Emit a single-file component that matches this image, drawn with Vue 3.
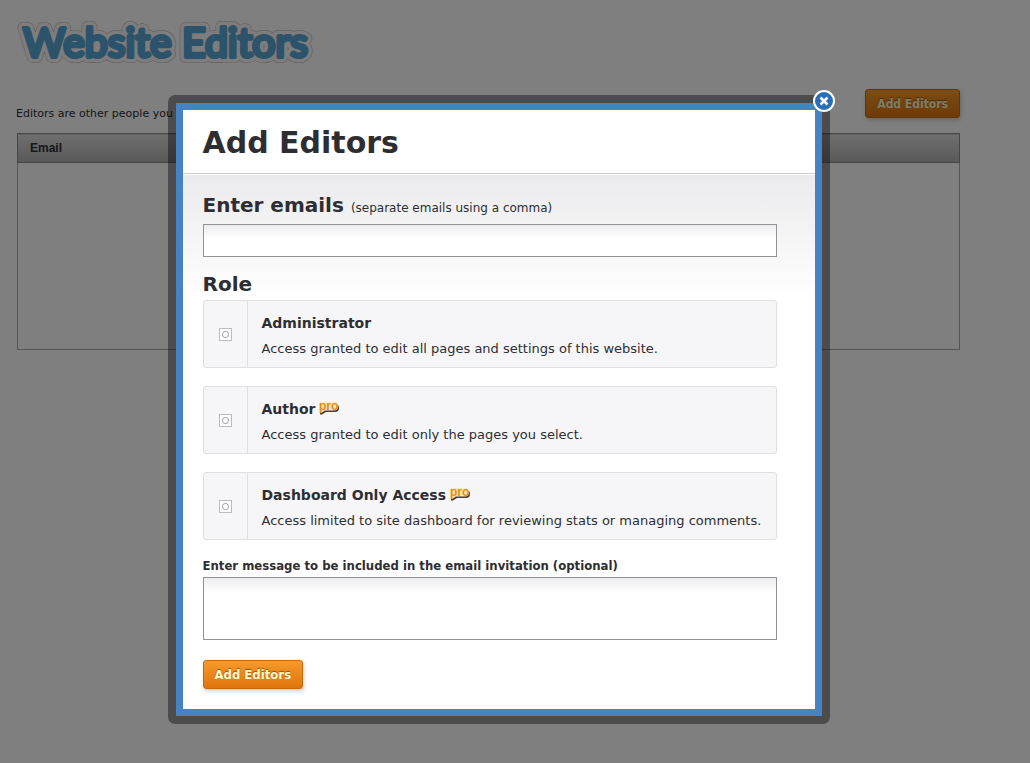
<script setup>
import { ref } from 'vue'

const role = ref('')
const emails = ref('')
const message = ref('')
const roles = [
  { id: 'admin', name: 'Administrator', pro: false, text: 'Access granted to edit all pages and settings of this website.' },
  { id: 'author', name: 'Author', pro: true, text: 'Access granted to edit only the pages you select.' },
  { id: 'dashboard', name: 'Dashboard Only Access', pro: true, text: 'Access limited to site dashboard for reviewing stats or managing comments.' },
]
</script>

<template>
  <div class="page">
    <h1 class="logo">
      <svg width="304" height="50" role="img" aria-label="Website Editors">
        <g class="logo-text">
          <text class="rim" x="8" y="41">Website Editors</text>
          <text class="halo" x="8" y="41">Website Editors</text>
          <text class="face" x="8" y="41">Website Editors</text>
        </g>
      </svg>
    </h1>
    <div class="bar">
      <p>Editors are other people you</p>
      <button class="btn" type="button">Add Editors</button>
    </div>
    <table class="list">
      <thead><tr><th scope="col">Email</th></tr></thead>
      <tbody><tr><td></td></tr></tbody>
    </table>
  </div>

  <div class="overlay">
    <div class="frame">
      <button class="close" type="button" aria-label="Close">
        <svg width="24" height="24" viewBox="0 0 24 24">
          <circle cx="12" cy="12" r="10" fill="#2a6db8" stroke="#fff" stroke-width="2" />
          <path d="M8.500 8.500l7 7M15.500 8.500l-7 7" stroke="#fff" stroke-width="2.600" />
        </svg>
      </button>
      <form class="dialog" role="dialog" aria-labelledby="title" @submit.prevent>
        <header><h2 id="title">Add Editors</h2></header>
        <div class="body">
          <div class="heading">
            <label for="emails">Enter emails</label>
            <small>(separate emails using a comma)</small>
          </div>
          <input id="emails" v-model="emails" class="field" type="text">
          <fieldset>
            <legend>Role</legend>
            <label v-for="r in roles" :key="r.id" class="role">
              <span class="pick"><input v-model="role" type="radio" name="role" :value="r.id"></span>
              <span class="info">
                <span class="name">{{ r.name }}<svg v-if="r.pro" class="pro" width="22" height="16" viewBox="0 0 22 16">
                  <path d="M4 5h13a4 4 0 0 1 4 4a4 4 0 0 1-4 4H8l-4 2.500H2V6z" fill="#4b3d3a" />
                  <path d="M2 3h14a4 4 0 0 1 4 4a4 4 0 0 1-4 4.500H7l-4 2.500H1V4z" fill="#fbe6bd" />
                  <text x="1" y="11">pro</text>
                </svg></span>
                <span class="desc">{{ r.text }}</span>
              </span>
            </label>
          </fieldset>
          <label class="msg-label" for="message">Enter message to be included in the email invitation (optional)</label>
          <textarea id="message" v-model="message" class="field"></textarea>
          <button class="btn btn-main" type="submit">Add Editors</button>
        </div>
      </form>
    </div>
  </div>
</template>

<style>
body { margin: 0; background: #fff; }
</style>

<style scoped>
* { box-sizing: border-box; }
.page, .overlay { font-family: "DejaVu Sans", Verdana, sans-serif; color: #2e2e32; }
.page { padding: 16px 70px 0 17px; }
.logo { margin: 0; height: 73px; }
.logo svg { display: block; overflow: visible; margin-left: -2px; }
.logo-text { font: 400 41px "Lato", sans-serif; stroke-linejoin: round; }
.rim { fill: #bcaea6; stroke: #bcaea6; stroke-width: 12px; }
.halo { fill: #fafafa; stroke: #fafafa; stroke-width: 11px; }
.face { fill: #5ba7d6; stroke: #5ba7d6; stroke-width: 4px; }
.bar { display: flex; justify-content: space-between; height: 44px; }
.bar p { margin: 18px 0 0 -1px; font-size: 11px; line-height: 14px; }
.btn {
  display: block; height: 29px; padding: 0 11px; border: 1px solid #c16a0e; border-radius: 3px;
  background: linear-gradient(#f79a2b, #dd750d); box-shadow: 1px 2px 4px rgba(0, 0, 0, .2);
  color: #fffbd0; font: bold 12px "DejaVu Sans Condensed", "DejaVu Sans", sans-serif;
  text-shadow: 0 -1px 1px #95500b;
}
.btn-main { font-size: 13px; }
.list { width: 100%; border-collapse: collapse; }
.list th {
  height: 29px; padding: 0 12px; border: 1px solid #8c8c8c; text-align: left;
  background: linear-gradient(#dedede, #b2b2b2); font: bold 12px "Liberation Sans", Arial, sans-serif;
}
.list td { height: 187px; border: 1px solid #aaa; }
.overlay {
  position: fixed; inset: 0; display: flex; justify-content: center; align-items: flex-start;
  padding: 95px 33px 0 0; background: rgba(0, 0, 0, .5);
}
.frame { position: relative; width: 662px; max-width: 100%; padding: 8px; border-radius: 7px; background: rgba(0, 0, 0, .4); }
.close { position: absolute; top: -6px; right: -6px; width: 24px; height: 24px; padding: 0; border: 0; background: none; }
.close svg { display: block; }
.dialog { border: 7px solid #4683c3; background: #fff; }
header { padding: 15px 20px 12px; border-bottom: 1px solid #ccc; }
h2 { margin: 0; font-size: 30px; line-height: 36px; }
.body { margin-top: 1px; padding: 16px 38px 20px 20px; background: linear-gradient(#ebebed, #fff 124px); }
.heading { display: flex; align-items: baseline; gap: 7px; height: 33px; }
.heading label, legend { font-size: 20px; font-weight: bold; line-height: 28px; }
.heading small { font-size: 12px; }
.field {
  display: block; width: 100%; height: 33px; padding: 4px 8px; border: 1px solid #929296; border-radius: 0;
  background: linear-gradient(#ededf0, #fff 14px); font: 13px "DejaVu Sans", sans-serif; outline: 0; resize: none;
}
fieldset { margin: 13px 0 0; padding: 0; border: 0; }
legend { padding: 0 0 2px; }
.role {
  display: flex; height: 68px; margin-bottom: 18px; border: 1px solid #dfdfe4; border-radius: 3px; background: #f6f6f8;
}
.role:last-child { margin-bottom: 16px; }
.pick { display: flex; align-items: center; justify-content: center; width: 44px; border-right: 1px solid #dfdfe4; }
.pick input {
  appearance: none; width: 13px; height: 13px; margin: 0; border: 1px solid #bcbcbc;
  background: radial-gradient(circle, #fff 2px, #aaa 3px, #fff 4px);
}
.info { flex: 1; padding: 12px 14px 0; }
.name { display: flex; height: 27px; font-size: 14px; font-weight: bold; line-height: 20px; }
.desc { display: block; font-size: 13px; line-height: 18px; }
.pro { margin: 0 0 0 3px; overflow: visible; }
.pro text { font: bold 12px "Liberation Sans", sans-serif; fill: #e3900f; }
.msg-label { display: block; margin-bottom: 1px; font: bold 13px/20px "DejaVu Sans Condensed", "DejaVu Sans", sans-serif; }
textarea.field { height: 63px; margin-bottom: 20px; }
</style>
